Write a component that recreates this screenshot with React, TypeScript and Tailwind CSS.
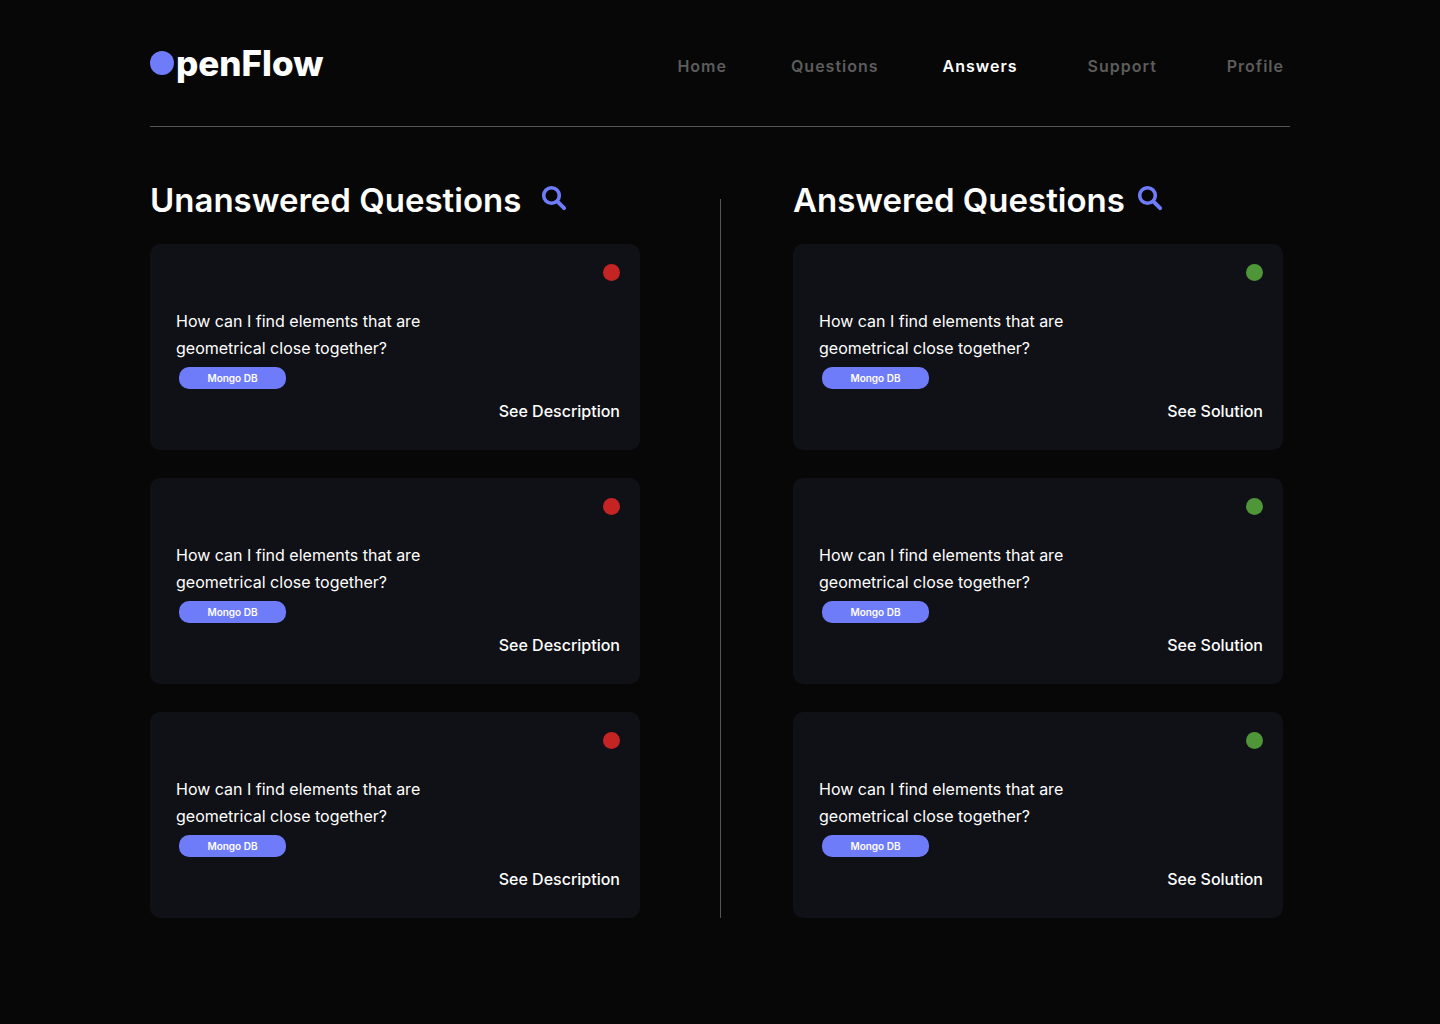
const navItems = [
  { label: "Home", active: false, spacing: "" },
  { label: "Questions", active: false, spacing: "ml-16" },
  { label: "Answers", active: true, spacing: "ml-16" },
  { label: "Support", active: false, spacing: "ml-[70px]" },
  { label: "Profile", active: false, spacing: "ml-[70px]" },
];

const question = {
  title: "How can I find elements that are geometrical close together?",
  tag: "Mongo DB",
};

const questions = [
  { id: 1, ...question },
  { id: 2, ...question },
  { id: 3, ...question },
];

function SearchIcon() {
  return (
    <svg viewBox="0 0 26 26" className="size-[26px]" fill="none" stroke="currentColor" aria-hidden="true">
      <circle cx="10.5" cy="10.5" r="7.8" strokeWidth="3.6" />
      <path d="M16.3 16.3 L23.1 23.1" strokeWidth="4" strokeLinecap="round" />
    </svg>
  );
}

type ColumnProps = {
  heading: string;
  headingGap: string;
  action: string;
  dot: string;
  status: string;
};

function QuestionColumn({ heading, headingGap, action, dot, status }: ColumnProps) {
  return (
    <section className="min-w-0 flex-1">
      <div className={`flex h-12 items-center ${headingGap}`}>
        <h2 className="whitespace-nowrap text-[33px] font-semibold leading-[48px]">{heading}</h2>
        <button type="button" aria-label={`Search ${heading}`} className="mb-1 cursor-pointer text-[#6f7cfa]">
          <SearchIcon />
        </button>
      </div>
      <ul className="mt-5 flex flex-col gap-7">
        {questions.map((item) => (
          <li key={item.id} className="flex flex-col rounded-[10px] bg-[#101116] pb-[27px] pl-[26px] pr-5 pt-5">
            <span role="img" aria-label={status} className={`size-[17px] self-end rounded-full ${dot}`} />
            <p className="mt-[27px] max-w-[280px] text-base leading-[27px]">{item.title}</p>
            <span className="ml-[3px] mt-[5px] flex h-[22px] w-[107px] items-center justify-center rounded-[10px] bg-[#6f7cfa] text-[10px] font-semibold">
              {item.tag}
            </span>
            <a href="#" className="mt-2.5 self-end text-base font-medium leading-6">
              {action}
            </a>
          </li>
        ))}
      </ul>
    </section>
  );
}

export default function App() {
  return (
    <div className="min-h-screen bg-[#070707] px-[150px] pb-[106px] font-['Inter',sans-serif] text-white">
      <header className="flex items-center justify-between border-b border-[#555555] pb-[41px] pt-[41px]">
        <a href="#" aria-label="OpenFlow" className="flex items-center gap-0.5">
          <span className="size-6 rounded-full bg-[#6f7cfa]" />
          <span className="text-[35px] font-extrabold leading-[44px]">penFlow</span>
        </a>
        <nav className="mt-1.5 flex pr-1.5 text-base font-semibold leading-6 tracking-[1px]">
          {navItems.map((item) => (
            <a
              key={item.label}
              href="#"
              aria-current={item.active ? "page" : undefined}
              className={`${item.spacing} ${item.active ? "text-white" : "text-[#5c5c5c]"}`}
            >
              {item.label}
            </a>
          ))}
        </nav>
      </header>
      <main className="flex pr-[7px] pt-[49px]">
        <QuestionColumn
          heading="Unanswered Questions"
          headingGap="gap-5"
          action="See Description"
          dot="bg-[#c52424]"
          status="Unanswered"
        />
        <div className="ml-20 mr-[72px] mt-[23px] w-px bg-[#555555]" />
        <QuestionColumn
          heading="Answered Questions"
          headingGap="gap-3"
          action="See Solution"
          dot="bg-[#4f9638]"
          status="Answered"
        />
      </main>
    </div>
  );
}
